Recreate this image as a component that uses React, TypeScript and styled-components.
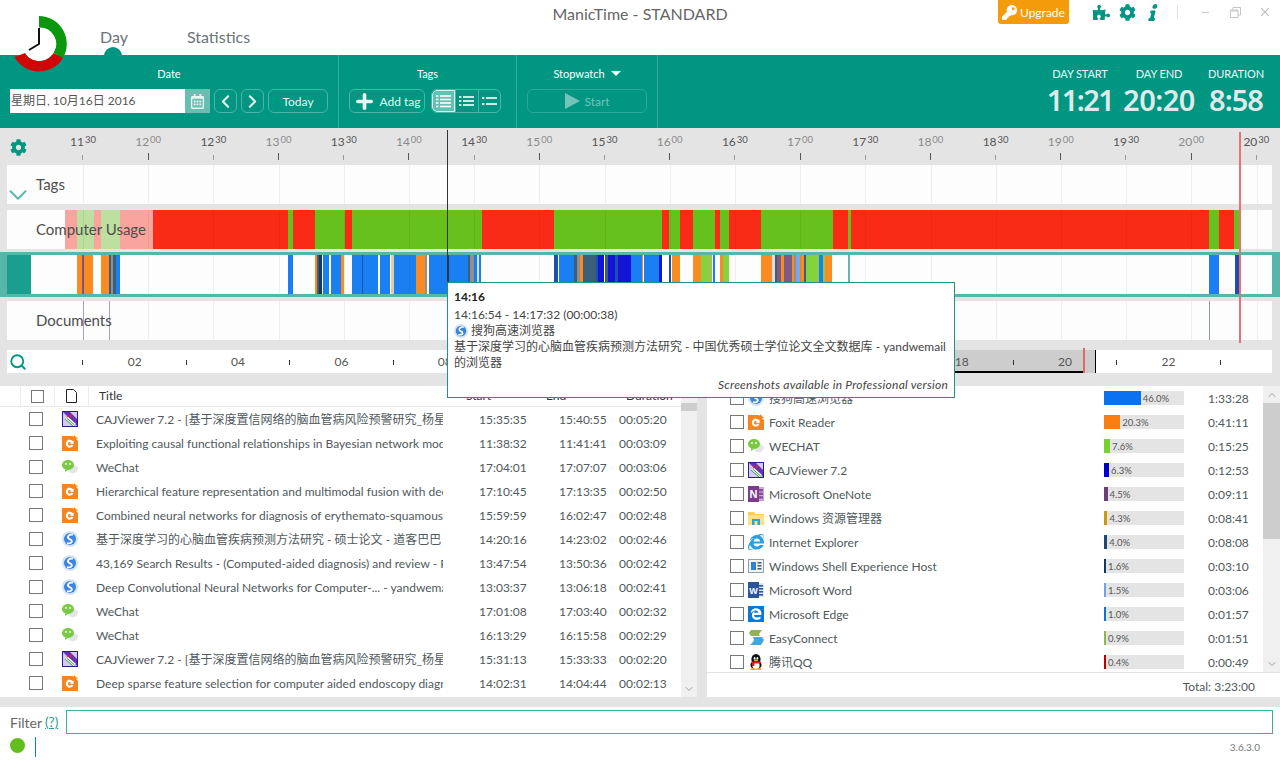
import React from "react";
import styled, { createGlobalStyle } from "styled-components";
import { FaCog, FaEdgeLegacy, FaInfo, FaInternetExplorer, FaKey, FaPuzzlePiece, FaRegCalendarAlt } from "react-icons/fa";
import { ChevronDown, ChevronLeft, ChevronRight, ChevronUp, Minus, Plus, Search, X } from "lucide-react";

const TEAL = "#009682";
const FONT = `Lato, "Noto Sans CJK SC", sans-serif`;

const Global = createGlobalStyle`
  html, body { margin: 0; padding: 0; background: #fff; }
  body { font-family: ${FONT}; overflow: hidden; }
  * { box-sizing: border-box; }
`;

const Page = styled.div`
  position: relative; width: 1280px; height: 760px; overflow: hidden; background: #fff; display: flex; flex-direction: column; color: #50595c; font-size: 12px;
`;

/* ---------- header ---------- */
const Header = styled.header`height: 55px; display: flex; flex-direction: column; position: relative;`;
const TopRow = styled.div`height: 28px; display: grid; grid-template-columns: 1fr 220px 1fr;`;
const AppTitle = styled.div`font-size: 16px; line-height: 28px; text-align: center; color: #666; font-weight: 400; white-space: nowrap;`;
const WinControls = styled.div`display: flex; align-items: flex-start; justify-content: flex-end;`;
const Upgrade = styled.div`
  width: 71px; height: 24px; background: #f49b0c; border-radius: 0 0 3px 3px; color: #fff; display: flex; align-items: center; gap: 3px; padding-left: 4px; font-size: 12px;
  margin-right: 19px;
`;
const ToolIcon = styled.span`width: 26px; height: 24px; display: flex; align-items: center; justify-content: center; color: ${TEAL}; font-size: 17px;`;
const ItalicIcon = styled(ToolIcon)`transform: skewX(-14deg);`;
const VSep = styled.span`width: 1px; height: 14px; margin: 5px 12px 0 11px; background: #e2e2e2;`;
const WinBtn = styled.span`width: 30px; height: 24px; display: flex; align-items: center; justify-content: center; color: #c4c4c4;`;
const Tabs = styled.nav`display: flex; padding-left: 100px; gap: 59px; height: 27px;`;
const TabLabel = styled.span`font-size: 16px; color: #6a7477; line-height: 18px; font-weight: 400;`;
const DayBump = styled.span`position: absolute; left: 104px; top: 47px; width: 18px; height: 9px; border-radius: 9px 9px 0 0; background: ${TEAL};`;
const LogoWrap = styled.span`position: absolute; left: 10px; top: 12px; z-index: 5; line-height: 0;`;

/* ---------- toolbar ---------- */
const Toolbar = styled.div`height: 73px; background: ${TEAL}; display: flex; color: #fff;`;
const Section = styled.section<{ $w: number; $pad?: number }>`
  width: ${p => p.$w}px; border-right: 1px solid #33ab9b; display: flex; flex-direction: column; padding-left: ${p => p.$pad ?? 0}px;
`;
const SectionLabel = styled.div<{ $ml?: number }>`height: 34px; padding-top: 10px; line-height: 18px; font-size: 11px; text-align: center; margin-left: ${p => p.$ml ?? 0}px;`;
const SectionRow = styled.div`display: flex; align-items: center; height: 24px;`;
const DateInput = styled.div`width: 175px; height: 24px; background: #fff; color: #555; font-size: 12px; line-height: 24px; padding-left: 1px; white-space: nowrap;`;
const CalBtn = styled.div`width: 25px; height: 24px; background: #67bfb2; display: flex; align-items: center; justify-content: center; color: #e6f4f2; font-size: 15px; margin-right: 4px;`;
const GhostBtn = styled.div<{ $w: number; $ml?: number; $dim?: boolean }>`
  width: ${p => p.$w}px; height: 24px; margin-left: ${p => p.$ml ?? 0}px; border: 1px solid ${p => p.$dim ? "#2aa899" : "#4db5a7"}; border-radius: 6px;
  display: flex; align-items: center; justify-content: center; gap: 3px; font-size: 12px; color: ${p => p.$dim ? "#74c4b8" : "#e8f5f3"};
`;
const ViewGroup = styled.div`margin-left: 6px; width: 70px; height: 24px; border: 1px solid #4db5a7; border-radius: 6px; display: flex; overflow: hidden;`;
const ViewBtn = styled.div<{ $on?: boolean }>`
  flex: 1; display: flex; align-items: center; justify-content: center; background: ${p => p.$on ? "#66bfb3" : "transparent"};
  border: ${p => p.$on ? "1px solid #dff1ee" : "none"}; border-radius: ${p => p.$on ? "5px 0 0 5px" : "0"}; & + & { border-left: 1px solid #4db5a7; }
`;
const Caret = styled.span`display: inline-block; margin-left: 6px; border: 5px solid transparent; border-top-color: #fff; border-bottom: 0; vertical-align: 2px;`;
const Stats = styled.div`margin-left: auto; display: flex; gap: 14px; padding-right: 17px;`;
const Stat = styled.div<{ $w: number }>`width: ${p => p.$w}px; display: flex; flex-direction: column; align-items: center;`;
const StatLabel = styled.div`font-size: 11px; line-height: 18px; padding-top: 10px; color: #eef7f6; white-space: nowrap; letter-spacing: -.1px;`;
const StatValue = styled.div<{ $ls: number }>`font-family: "Noto Sans", sans-serif; font-size: 29px; font-weight: 600; line-height: 32px; padding-top: 1px; color: #dfeaea; letter-spacing: ${p => p.$ls}px; white-space: nowrap;`;

/* ---------- timeline ---------- */
const Timeline = styled.div`position: relative; background: #e4e4e4; height: 258px; display: flex; flex-direction: column;`;
const Ruler = styled.div`height: 37px; display: flex; overflow: hidden;`;
const RulerGear = styled.div`width: 50.4px; flex: none; padding: 11px 0 0 10px; color: ${TEAL}; font-size: 17px; line-height: 0;`;
const Tick = styled.div`width: 65.2px; flex: none; display: flex; flex-direction: column; align-items: center;`;
const TickLabel = styled.div<{ $major: boolean }>`height: 25px; padding-top: 6px; font-size: 12px; line-height: 16px; color: ${p => p.$major ? "#8a8a8a" : "#555"}; white-space: nowrap;`;
const TickMin = styled.sup`font-size: 9.5px; line-height: 0; vertical-align: 3px; margin-left: 1px;`;
const TickMark = styled.div<{ $major: boolean }>`width: 1px; height: ${p => p.$major ? 7 : 5}px; margin-top: ${p => p.$major ? 0 : 2}px; background: ${p => p.$major ? "#555" : "#999"};`;
const Track = styled.div<{ $h: number; $mt: number }>`
  position: relative; height: ${p => p.$h}px; margin: ${p => p.$mt}px 8px 0 7px; background: #fdfdfd; line-height: 0;
`;
const TrackLabel = styled.div<{ $top: number }>`position: absolute; left: 29px; top: ${p => p.$top}px; font-size: 15px; line-height: 20px; color: #4d4d4d; white-space: nowrap;`;
const ChevronBox = styled.div`position: absolute; left: -4px; top: 15px; color: #5bb8ab; line-height: 0;`;
const AppBand = styled.div`height: 45px; margin-top: 3px; background: #55b6a9; padding: 3px 8px 3px 7px; line-height: 0;`;
const AppTrack = styled.div`height: 39px; background: #fdfdfd;`;
const Overview = styled.div`position: relative; height: 23px; margin: 10px 8px 0 7px; background: #fff; display: flex; align-items: center;`;
const OverviewSearch = styled.div`width: 50.15px; flex: none; padding-left: 2px; color: ${TEAL}; line-height: 0; position: relative;`;
const Slot = styled.div`width: 51.7px; flex: none; text-align: center; font-size: 12px; color: #555; position: relative;`;
const SlotMark = styled.span`display: inline-block; width: 1px; height: 5px; background: #333; vertical-align: middle;`;
const Selection = styled.div`position: absolute; left: 610px; width: 479px; top: 0; bottom: 0; background: #cdcdcd; border-right: 1px solid #000;`;
const SelBase = styled.div`position: absolute; left: 0; width: 466px; bottom: 0; height: 2px; background: #000;`;
const SelEnd = styled.div`position: absolute; left: 466px; width: 2px; top: -2px; bottom: 0; background: #e06a6a;`;
const CursorLine = styled.div`position: absolute; left: 447px; top: 2px; height: 152px; width: 1px; background: #333; z-index: 2;`;
const NowLine = styled.div`position: absolute; left: 1239px; top: 4px; height: 211px; width: 2px; background: #e37474; z-index: 2;`;

/* ---------- tooltip ---------- */
const Tip = styled.div`
  position: absolute; left: 447px; top: 282px; width: 508px; height: 116px; background: #fff; border: 1px solid #1d9486; z-index: 10; padding: 6px 6px 0 6px; font-size: 12px; line-height: 16px; color: #444;
`;
const TipTime = styled.div`font-weight: 700; color: #222; margin-bottom: 2px;`;
const TipApp = styled.div`display: flex; align-items: center; gap: 3px; height: 16px;`;
const TipNote = styled.div`position: absolute; right: 6px; bottom: 4px; font-style: italic; color: #444; letter-spacing: .24px;`;

/* ---------- tables ---------- */
const Panels = styled.div`height: 311px; display: flex; background: #e4e4e4;`;
const LeftPanel = styled.div`width: 697px; flex: none; background: #fff; display: flex;`;
const RightPanel = styled.div`width: 573px; flex: none; margin-left: 10px; background: #fff; display: flex; flex-direction: column;`;
const TableBody = styled.div`flex: 1; min-width: 0; display: flex; flex-direction: column;`;
const HeadRow = styled.div`height: 21px; display: grid; grid-template-columns: 20px 34px 34px 368px 80px 80px 1fr; border-bottom: 1px solid #e6e6e6; color: #333; font-size: 12px; line-height: 20px;`;
const HeadCell = styled.div<{ $sep?: boolean; $center?: boolean }>`
  display: flex; align-items: center; justify-content: ${p => p.$center ? "center" : "flex-start"}; padding-left: ${p => p.$center ? 0 : 10}px; border-left: ${p => p.$sep ? "1px solid #ececec" : "none"}; white-space: nowrap;
`;
const Rows = styled.div`flex: 1; overflow: hidden;`;
const LRow = styled.div`height: 24px; display: grid; grid-template-columns: 62px 34px 347px 36px 80px 60px 1fr; align-items: center;`;
const Box = styled.span<{ $s?: number }>`display: block; width: ${p => p.$s ?? 14}px; height: ${p => p.$s ?? 14}px; border: 1px solid #777; background: #fff;`;
const BoxCell = styled.div`padding-left: 29px;`;
const IconCell = styled.div`line-height: 0; display: flex;`;
const RowIcon = styled.span`line-height: 0;`;
const TitleText = styled.div`overflow: hidden; white-space: nowrap; color: #50595c; font-size: 12px; line-height: 16px; height: 17px; margin-top: 2px;`;
const TimeCell = styled.div`white-space: nowrap; color: #50595c; font-size: 12px;`;
const Gap = styled.div``;
const ScrollTrack = styled.div<{ $w: number }>`width: ${p => p.$w}px; flex: none; background: #f0f0f0; display: flex; flex-direction: column; align-items: stretch; color: #a0a0a0;`;
const ScrollArrow = styled.div`height: 17px; display: flex; align-items: center; justify-content: center;`;
const ScrollThumb = styled.div<{ $h: number }>`height: ${p => p.$h}px; background: #cdcdcd;`;
const ScrollFill = styled.div`flex: 1;`;
const RightMain = styled.div`height: 286px; display: flex;`;
const RRows = styled.div`flex: 1; overflow: hidden;`;
const RRow = styled.div`height: 24px; display: grid; grid-template-columns: 23px 18px 21px 335px 104px 1fr; align-items: center;`;
const BarBox = styled.div`width: 80px; height: 14px; background: #e4e4e4; display: flex; align-items: center; font-size: 9.5px; color: #555; white-space: nowrap;`;
const BarFill = styled.span<{ $c: string }>`display: block; height: 14px; background: ${p => p.$c}; margin-right: 2px; flex: none;`;
const TotalRow = styled.div`height: 25px; border-top: 1px solid #e2e2e2; text-align: right; line-height: 27px; padding-right: 25px; font-size: 12px; color: #50595c;`;

/* ---------- footer ---------- */
const FilterRow = styled.div`border-top: 10px solid #e4e4e4; height: 40px; display: flex; align-items: center; padding: 3px 7px 3px 10px;`;
const FilterLabel = styled.span`font-size: 14px; color: #666; width: 35px; flex: none;`;
const Help = styled.span`font-size: 13.5px; color: #2c9a8d; text-decoration: underline; width: 21px; flex: none;`;
const FilterInput = styled.div`flex: 1; height: 24px; border: 1px solid #41ad9f;`;
const StatusRow = styled.div`height: 23px; display: flex; align-items: flex-start; padding-left: 10px;`;
const Dot = styled.span`width: 15px; height: 15px; border-radius: 50%; background: #62bd1e; margin-top: 1px;`;
const StatusSep = styled.span`width: 1px; height: 20px; background: ${TEAL}; margin-left: 10px;`;
const Version = styled.span`margin-left: auto; padding: 4px 20px 0 0; font-size: 10px; color: #777;`;

const R = "#f92b17", G = "#66c11f", PR = "#f9a59d", PG = "#bde0a0", B = "#1a7ff2", O = "#fb8a20", N = "#1b4fb0", S = "#3b5f78", D = "#1414d8", Y = "#8f8f8f", LG = "#84d23d", P = "#7c5a84";

type Seg = [number, number, string];
const usage: Seg[] = [[65,77,PR],[77,94,PG],[94,101,PR],[101,120,PG],[120,153,PR],[153,288,R],[288,293,G],[293,315,R],[315,345,G],[345,352,R],[352,482,G],[482,554,R],[554,662,G],[662,669,R],[669,680,G],[680,693,R],[693,715,G],[715,720,R],[720,729,G],[729,761,R],[761,833,G],[833,848,R],[848,851,G],[851,1209,R],[1209,1219,G],[1219,1234,R],[1234,1240,G]];
const apps: Seg[] = [[7,31,"#1a9f8e"],[77,82,O],[82,84,P],[84,93,O],[101,109,O],[109,111,S],[111,113,Y],[113,116,S],[116,120,B],[288,293,B],[315,317,O],[317,319,S],[319,322,"#123a5c"],[323,329,B],[331,341,B],[341,344,O],[352,362,B],[362,363,N],[363,378,B],[380,390,B],[391,394,"#e8c9a0"],[394,416,B],[416,425,O],[425,427,Y],[429,447,B],[447,449,"#123a5c"],[449,468,B],[468,470,S],[470,474,Y],[474,477,B],[477,479,"#ddd"],[479,481,B],[554,558,N],[559,574,B],[574,577,S],[577,580,Y],[580,583,O],[583,588,S],[588,596,S],[596,598,N],[598,604,D],[605,608,S],[608,615,D],[615,618,N],[618,631,D],[631,642,B],[642,643,O],[644,659,B],[659,662,D],[669,671,N],[672,680,O],[693,701,O],[701,708,LG],[708,712,"#9ac84a"],[713,715,B],[720,723,O],[723,729,LG],[761,772,O],[772,775,"#ddd"],[775,777,S],[777,781,P],[781,784,O],[784,788,P],[788,792,P],[792,794,O],[794,796,Y],[796,800,"#7ba6ea"],[800,804,O],[804,806,S],[806,819,LG],[819,823,B],[823,825,LG],[825,832,O],[848,850,"#6fb0a8"],[1209,1219,B],[1235,1240,N]];
const grids = Array.from({ length: 19 }, (_, i) => 83 + i * 65.2);

const Chart: React.FC<{ h: number; segs?: Seg[]; lines?: Seg[] }> = ({ h, segs = [], lines = [] }) => (
  <svg width={1265} height={h} viewBox={`7 0 1265 ${h}`} style={{ display: "block" }}>
    {segs.map(([a, b, c], i) => <rect key={i} x={a} y={0} width={b - a} height={h} fill={c} />)}
    {grids.map((x, i) => <rect key={i} x={Math.round(x)} y={0} width={1} height={h} fill="#000" opacity={0.06} />)}
    {lines.map(([a, b, c], i) => <rect key={i} x={a} y={0} width={b - a} height={h} fill={c} />)}
  </svg>
);

const Logo = () => (
  <svg width={60} height={62} viewBox="10 12 60 62">
    <circle cx={39} cy={44} r={17} fill="#fff" />
    <path d="M39 16 A28 28 0 0 1 63 58 L53.500 53 A16.500 16.500 0 0 0 39 27.500 Z" fill="#0b980f" />
    <path d="M63 58 A28 28 0 0 1 14.500 57 L25 53 A16.500 16.500 0 0 0 53.500 53 Z" fill="#d00606" />
    <path d="M39 28 V44 L29 50" fill="none" stroke="#111" strokeWidth={2} strokeLinejoin="round" />
  </svg>
);

type K = "foxit" | "sogou" | "wechat" | "caj" | "onenote" | "folder" | "ie" | "shell" | "word" | "edge" | "easy" | "qq";
const AppIcon: React.FC<{ k: K; s?: number }> = ({ k, s = 16 }) => {
  if (k === "ie") return <span style={{ position: "relative", width: s, height: s, display: "block" }}><FaInternetExplorer size={s} color="#2a9fe0" /></span>;
  if (k === "edge") return <svg width={s} height={s} viewBox="0 0 16 16"><rect width={16} height={16} fill="#0f78d4" /><foreignObject x={2} y={2} width={12} height={12}><FaEdgeLegacy size={12} color="#fff" /></foreignObject></svg>;
  return (
    <svg width={s} height={s} viewBox="0 0 16 16">
      {k === "foxit" && <g><path d="M0 1h11l5 5v10H0z" fill="#f6841f" /><path d="M12 0l4 4h-4z" fill="#f6841f" /><path d="M11 6.200A4 4 0 1 0 11.400 10.400L9.300 9.600A1.800 1.800 0 1 1 8.800 7.400L7.600 8.600 11.600 9.200 11.600 5.500z" fill="#fff" /></g>}
      {k === "sogou" && <g><circle cx={8} cy={8} r={8} fill="#d6e3f2" /><circle cx={8} cy={8} r={6} fill="#3b86dc" /><path d="M11 3.600C7.500 3 5 5 6.400 7.200 7.600 9 10 8.400 9.600 9.800 10.600 11 8.500 12.800 5 12.200" fill="none" stroke="#fff" strokeWidth={1.8} /></g>}
      {k === "wechat" && <g><ellipse cx={10.8} cy={10} rx={5} ry={4.2} fill="#e2e4e6" /><ellipse cx={6} cy={6} rx={6} ry={5} fill="#7ac943" /><path d="M3 10l0 3 3-2z" fill="#7ac943" /><circle cx={4} cy={5} r={.9} fill="#fff" /><circle cx={8} cy={5} r={.9} fill="#fff" /></g>}
      {k === "caj" && <g><rect width={16} height={16} fill="#20209a" /><rect x={1} y={1} width={14} height={14} fill="#d9c8ee" /><path d="M1 1h7L15 8v7z" fill="#6a2fb0" /><path d="M8 2l2 3-2 2zM5 3l2 3-2 1z" fill="#d2342a" /><path d="M3 8l3-2 8 7-3 2z" fill="#fff" /><path d="M3 8l8 7M4.600 7l8 7" stroke="#2e9a3a" strokeWidth={1} /></g>}
      {k === "onenote" && <g><rect x={5} y={1} width={11} height={14} fill="#c9a7d6" /><rect x={10} y={3} width={5} height={2.4} fill="#8a4d9e" /><rect x={10} y={6.6} width={5} height={2.4} fill="#8a4d9e" /><rect x={10} y={10.2} width={5} height={2.4} fill="#8a4d9e" /><rect y={0} width={11} height={16} fill="#7a3b8c" /><text x={5.5} y={12} fontSize={11} fontWeight={700} fill="#fff" textAnchor="middle" fontFamily="Liberation Sans">N</text></g>}
      {k === "folder" && <g><path d="M0 2h6l1 2h9v11H0z" fill="#f6cf55" /><rect y={5} width={16} height={10} fill="#fbe08a" /><rect x={4} y={9} width={8} height={6} fill="#2aa7d9" /><rect x={6.5} y={11} width={3} height={4} fill="#fbe08a" /></g>}
      {k === "shell" && <g><rect x={0} y={1} width={16} height={14} fill="#8ea0ad" /><rect x={1} y={2} width={14} height={12} fill="#f1f4f6" /><rect x={3} y={4} width={5} height={8} fill="#2f82d0" /><rect x={9.5} y={4} width={4} height={1.6} fill="#4b6070" /><rect x={9.5} y={7} width={4} height={1.6} fill="#4b6070" /><rect x={9.5} y={10} width={4} height={1.6} fill="#4b6070" /></g>}
      {k === "word" && <g><rect x={5} y={1} width={11} height={14} fill="#dfe7f3" /><rect x={10} y={3} width={5} height={1.6} fill="#2b579a" /><rect x={10} y={6} width={5} height={1.6} fill="#2b579a" /><rect x={10} y={9} width={5} height={1.6} fill="#2b579a" /><rect x={10} y={12} width={5} height={1.6} fill="#2b579a" /><rect y={0} width={11} height={16} fill="#2b579a" /><text x={5.5} y={11.5} fontSize={9} fontWeight={700} fill="#fff" textAnchor="middle" fontFamily="Liberation Sans">W</text></g>}
      {k === "easy" && <g><path d="M3 0h11l-3 4 1 2H3L1 3z" fill="#8cb554" /><path d="M5 7h9l2 3-3 5H2l3-3 1-2z" fill="#3fa7dd" /></g>}
      {k === "qq" && <g><ellipse cx={8} cy={5.5} rx={4.6} ry={5.5} fill="#111" /><ellipse cx={8} cy={11} rx={5.6} ry={4.2} fill="#111" /><ellipse cx={8} cy={11.4} rx={3.6} ry={3.6} fill="#fff" /><rect x={3.4} y={7.4} width={9.2} height={2} rx={1} fill="#d81e1e" /><rect x={4} y={8.6} width={2.4} height={3.4} fill="#d81e1e" /><ellipse cx={5} cy={15} rx={2.6} ry={1} fill="#f0a020" /><ellipse cx={11} cy={15} rx={2.6} ry={1} fill="#f0a020" /><ellipse cx={6.6} cy={4.4} rx={.9} ry={1.3} fill="#fff" /><ellipse cx={9.4} cy={4.4} rx={.9} ry={1.3} fill="#fff" /><ellipse cx={8} cy={6.4} rx={2} ry={.8} fill="#f0b020" /></g>}
    </svg>
  );
};

const ListIcon: React.FC<{ rows: number }> = ({ rows }) => {
  const ys = rows === 4 ? [3, 6.5, 10, 13.5] : rows === 3 ? [4, 8, 12] : [5, 11];
  return (
    <svg width={17} height={16} viewBox="0 0 17 16">
      {ys.map(y => <g key={y}><rect x={1} y={y - .8} width={2.4} height={1.6} fill="#fff" /><rect x={5} y={y - .8} width={11} height={1.6} fill="#fff" /></g>)}
    </svg>
  );
};

const leftRows: [K, string, string, string, string][] = [
  ["caj", "CAJViewer 7.2 - [基于深度置信网络的脑血管病风险预警研究_杨星", "15:35:35", "15:40:55", "00:05:20"],
  ["foxit", "Exploiting causal functional relationships in Bayesian network modelling", "11:38:32", "11:41:41", "00:03:09"],
  ["wechat", "WeChat", "17:04:01", "17:07:07", "00:03:06"],
  ["foxit", "Hierarchical feature representation and multimodal fusion with deep learning", "17:10:45", "17:13:35", "00:02:50"],
  ["foxit", "Combined neural networks for diagnosis of erythemato-squamous diseases", "15:59:59", "16:02:47", "00:02:48"],
  ["sogou", "基于深度学习的心脑血管疾病预测方法研究 - 硕士论文 - 道客巴巴 - yand", "14:20:16", "14:23:02", "00:02:46"],
  ["sogou", "43,169 Search Results - (Computed-aided diagnosis) and review - PubMed", "13:47:54", "13:50:36", "00:02:42"],
  ["sogou", "Deep Convolutional Neural Networks for Computer-... - yandwemail 的浏览器", "13:03:37", "13:06:18", "00:02:41"],
  ["wechat", "WeChat", "17:01:08", "17:03:40", "00:02:32"],
  ["wechat", "WeChat", "16:13:29", "16:15:58", "00:02:29"],
  ["caj", "CAJViewer 7.2 - [基于深度置信网络的脑血管病风险预警研究_杨星", "15:31:13", "15:33:33", "00:02:20"],
  ["foxit", "Deep sparse feature selection for computer aided endoscopy diagnosis", "14:02:31", "14:04:44", "00:02:13"],
];

const rightRows: [K, string, number, string, string][] = [
  ["sogou", "搜狗高速浏览器", 46, "#0a72f0", "1:33:28"],
  ["foxit", "Foxit Reader", 20.3, "#fb7d10", "0:41:11"],
  ["wechat", "WECHAT", 7.6, "#77d22f", "0:15:25"],
  ["caj", "CAJViewer 7.2", 6.3, "#0000c8", "0:12:53"],
  ["onenote", "Microsoft OneNote", 4.5, "#6a3f75", "0:09:11"],
  ["folder", "Windows 资源管理器", 4.3, "#c89a10", "0:08:41"],
  ["ie", "Internet Explorer", 4.0, "#1d4a70", "0:08:08"],
  ["shell", "Windows Shell Experience Host", 1.6, "#123a5c", "0:03:10"],
  ["word", "Microsoft Word", 1.5, "#6fa0e8", "0:03:06"],
  ["edge", "Microsoft Edge", 1.0, "#1072d0", "0:01:57"],
  ["easy", "EasyConnect", 0.9, "#8db54a", "0:01:51"],
  ["qq", "腾讯QQ", 0.4, "#c00000", "0:00:49"],
];

const ticks = ["11 30", "12 00", "12 30", "13 00", "13 30", "14 00", "14 30", "15 00", "15 30", "16 00", "16 30", "17 00", "17 30", "18 00", "18 30", "19 00", "19 30", "20 00", "20 30"];
const slots = Array.from({ length: 23 }, (_, i) => i);

export default function App() {
  return (
    <Page>
      <Global />
      <Header>
        <LogoWrap><Logo /></LogoWrap>
        <DayBump />
        <TopRow>
          <div />
          <AppTitle>ManicTime - STANDARD</AppTitle>
          <WinControls>
            <Upgrade><FaKey size={15} />Upgrade</Upgrade>
            <ToolIcon><FaPuzzlePiece /></ToolIcon>
            <ToolIcon><FaCog /></ToolIcon>
            <ItalicIcon><FaInfo /></ItalicIcon>
            <VSep />
            <WinBtn><Minus size={11} strokeWidth={2} /></WinBtn>
            <WinBtn>
              <svg width={11} height={11} viewBox="0 0 11 11"><path d="M.5 3h7.500v7.500H.5zM3 3V.5h7.500V8H8M.5 4h7.500" fill="none" stroke="currentColor" /></svg>
            </WinBtn>
            <WinBtn><X size={14} strokeWidth={2} /></WinBtn>
          </WinControls>
        </TopRow>
        <Tabs>
          <TabLabel>Day</TabLabel>
          <TabLabel>Statistics</TabLabel>
        </Tabs>
      </Header>

      <Toolbar>
        <Section $w={339} $pad={10}>
          <SectionLabel $ml={-10}>Date</SectionLabel>
          <SectionRow>
            <DateInput>星期日, 10月16日 2016</DateInput>
            <CalBtn><FaRegCalendarAlt /></CalBtn>
            <GhostBtn $w={23}><ChevronLeft size={23} strokeWidth={2.4} /></GhostBtn>
            <GhostBtn $w={23} $ml={4}><ChevronRight size={23} strokeWidth={2.4} /></GhostBtn>
            <GhostBtn $w={60} $ml={4}>Today</GhostBtn>
          </SectionRow>
        </Section>
        <Section $w={178} $pad={10}>
          <SectionLabel $ml={-10}>Tags</SectionLabel>
          <SectionRow>
            <GhostBtn $w={76}><Plus size={23} strokeWidth={3.8} />Add tag</GhostBtn>
            <ViewGroup>
              <ViewBtn $on><ListIcon rows={4} /></ViewBtn>
              <ViewBtn><ListIcon rows={3} /></ViewBtn>
              <ViewBtn><ListIcon rows={2} /></ViewBtn>
            </ViewGroup>
          </SectionRow>
        </Section>
        <Section $w={141} $pad={10}>
          <SectionLabel $ml={-10}>Stopwatch<Caret /></SectionLabel>
          <SectionRow>
            <GhostBtn $w={120} $dim>
              <svg width={17} height={16} viewBox="0 0 17 16"><path d="M1 0l15 8-15 8z" fill="#74c4b8" /></svg>
              Start
            </GhostBtn>
          </SectionRow>
        </Section>
        <Stats>
          <Stat $w={58}><StatLabel>DAY START</StatLabel><StatValue $ls={-1.6}>11:21</StatValue></Stat>
          <Stat $w={72}><StatLabel>DAY END</StatLabel><StatValue $ls={-.5}>20:20</StatValue></Stat>
          <Stat $w={54}><StatLabel>DURATION</StatLabel><StatValue $ls={-1}>8:58</StatValue></Stat>
        </Stats>
      </Toolbar>

      <Timeline>
        <CursorLine />
        <NowLine />
        <Ruler>
          <RulerGear><FaCog /></RulerGear>
          {ticks.map(t => {
            const [h, m] = t.split(" ");
            const major = m === "00";
            return (
              <Tick key={t}>
                <TickLabel $major={major}>{h}<TickMin>{m}</TickMin></TickLabel>
                <TickMark $major={major} />
              </Tick>
            );
          })}
        </Ruler>
        <Track $h={39} $mt={0}>
          <Chart h={39} />
          <TrackLabel $top={9}>Tags</TrackLabel>
          <ChevronBox><ChevronDown size={30} strokeWidth={1.6} /></ChevronBox>
        </Track>
        <Track $h={39} $mt={6}>
          <Chart h={39} segs={usage} />
          <TrackLabel $top={9}>Computer Usage</TrackLabel>
        </Track>
        <AppBand>
          <AppTrack><Chart h={39} segs={apps} /></AppTrack>
        </AppBand>
        <Track $h={39} $mt={4}>
          <Chart h={39} lines={[[83, 84, "#a99be0"], [109, 110, "#a99be0"], [1209, 1210, "#8a9a9a"]]} />
          <TrackLabel $top={9}>Documents</TrackLabel>
        </Track>
        <Overview>
          <Selection><SelBase /><SelEnd /></Selection>
          <OverviewSearch><Search size={18} strokeWidth={2.4} /></OverviewSearch>
          {slots.map(i => (
            <Slot key={i}>
              {i % 2 === 0 ? <SlotMark /> : String(i + 1).padStart(2, "0")}
            </Slot>
          ))}
        </Overview>
      </Timeline>

      <Tip>
        <TipTime>14:16</TipTime>
        <div>14:16:54 - 14:17:32 (00:00:38)</div>
        <TipApp><AppIcon k="sogou" s={14} />搜狗高速浏览器</TipApp>
        <div>基于深度学习的心脑血管疾病预测方法研究 - 中国优秀硕士学位论文全文数据库 - yandwemail 的浏览器</div>
        <TipNote>Screenshots available in Professional version</TipNote>
      </Tip>

      <Panels>
        <LeftPanel>
          <TableBody>
            <HeadRow>
              <span />
              <HeadCell $sep $center><Box $s={13} /></HeadCell>
              <HeadCell $sep $center>
                <svg width={11} height={14} viewBox="0 0 11 14"><path d="M.5.500h7l3 3v10H.5z" fill="#fff" stroke="#222" /></svg>
              </HeadCell>
              <HeadCell $sep>Title</HeadCell>
              <HeadCell>Start</HeadCell>
              <HeadCell>End</HeadCell>
              <HeadCell>Duration</HeadCell>
            </HeadRow>
            <Rows>
              {leftRows.map((r, i) => (
                <LRow key={i}>
                  <BoxCell><Box /></BoxCell>
                  <IconCell><AppIcon k={r[0]} /></IconCell>
                  <TitleText>{r[1]}</TitleText>
                  <Gap />
                  <TimeCell>{r[2]}</TimeCell>
                  <TimeCell>{r[3]}</TimeCell>
                  <TimeCell>{r[4]}</TimeCell>
                </LRow>
              ))}
            </Rows>
          </TableBody>
          <ScrollTrack $w={16}>
            <ScrollArrow><ChevronUp size={12} /></ScrollArrow>
            <ScrollThumb $h={8} />
            <ScrollFill />
            <ScrollArrow><ChevronDown size={12} /></ScrollArrow>
          </ScrollTrack>
        </LeftPanel>
        <RightPanel>
          <RightMain>
            <RRows>
              {rightRows.map((r, i) => (
                <RRow key={i}>
                  <span />
                  <Box />
                  <RowIcon><AppIcon k={r[0]} /></RowIcon>
                  <TitleText>{r[1]}</TitleText>
                  <BarBox>
                    <BarFill $c={r[3]} style={{ width: Math.max(2, r[2] * 0.8) }} />
                    {r[2].toFixed(1)}%
                  </BarBox>
                  <TimeCell>{r[4]}</TimeCell>
                </RRow>
              ))}
            </RRows>
            <ScrollTrack $w={17}>
              <ScrollArrow><ChevronUp size={12} /></ScrollArrow>
              <ScrollThumb $h={136} />
              <ScrollFill />
              <ScrollArrow><ChevronDown size={12} /></ScrollArrow>
            </ScrollTrack>
          </RightMain>
          <TotalRow>Total: 3:23:00</TotalRow>
        </RightPanel>
      </Panels>

      <FilterRow>
        <FilterLabel>Filter</FilterLabel>
        <Help>(?)</Help>
        <FilterInput />
      </FilterRow>
      <StatusRow>
        <Dot />
        <StatusSep />
        <Version>3.6.3.0</Version>
      </StatusRow>
    </Page>
  );
}
